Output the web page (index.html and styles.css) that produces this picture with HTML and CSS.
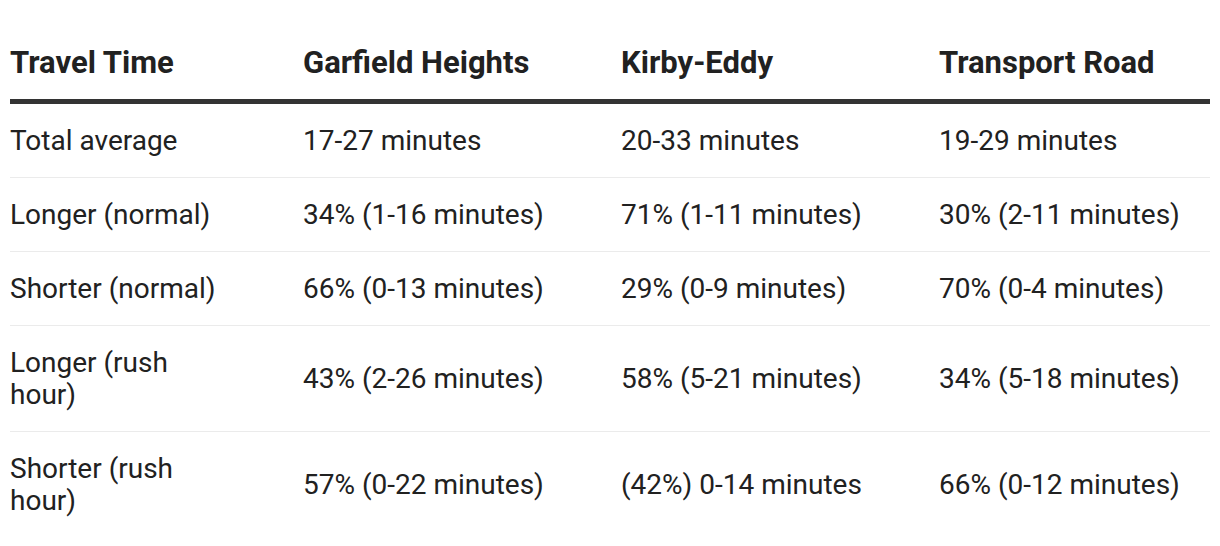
FILE: index.html
```html
<!DOCTYPE html>
<html>
<head>
<meta charset="utf-8">
<link rel="stylesheet" href="styles.css">
</head>
<body>
<table class="travel">
  <colgroup>
    <col class="c1"><col class="c2"><col class="c3"><col class="c4">
  </colgroup>
  <thead>
    <tr><th>Travel Time</th><th>Garfield Heights</th><th>Kirby-Eddy</th><th>Transport Road</th></tr>
  </thead>
  <tbody>
    <tr><td>Total average</td><td>17-27 minutes</td><td>20-33 minutes</td><td>19-29 minutes</td></tr>
    <tr><td>Longer (normal)</td><td>34% (1-16 minutes)</td><td>71% (1-11 minutes)</td><td>30% (2-11 minutes)</td></tr>
    <tr><td>Shorter (normal)</td><td>66% (0-13 minutes)</td><td>29% (0-9 minutes)</td><td>70% (0-4 minutes)</td></tr>
    <tr><td>Longer (rush hour)</td><td>43% (2-26 minutes)</td><td>58% (5-21 minutes)</td><td>34% (5-18 minutes)</td></tr>
    <tr><td>Shorter (rush hour)</td><td>57% (0-22 minutes)</td><td>(42%) 0-14 minutes</td><td>66% (0-12 minutes)</td></tr>
  </tbody>
</table>
</body>
</html>
```
FILE: styles.css
```css
html, body {
  margin: 0;
  padding: 0;
  background: #fff;
}
body {
  padding: 0 10px;
  font-family: Roboto, "Liberation Sans", sans-serif;
  color: #212121;
}
.travel {
  width: 1200px;
  border-collapse: collapse;
  table-layout: fixed;
  font-size: 28px;
  line-height: 32px;
}
.c1 { width: 293px; }
.c2 { width: 318px; }
.c3 { width: 318px; }
.c4 { width: 271px; }
.travel th {
  text-align: left;
  font-weight: 700;
  font-size: 31px;
  line-height: 34px;
  padding: 46px 0 19px 0;
  border-bottom: 5px solid #333;
  vertical-align: middle;
}
.travel td {
  padding: 21px 0 20px;
  border-bottom: 1px solid #ebebeb;
  vertical-align: middle;
}
.travel td:first-child {
  padding-right: 70px;
}
.travel tr:last-child td {
  border-bottom: none;
}
```
